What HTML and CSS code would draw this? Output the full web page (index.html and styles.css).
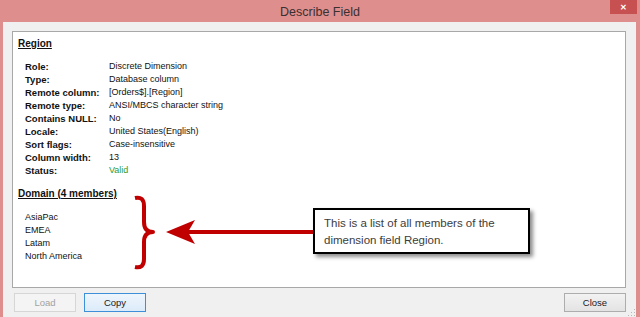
FILE: index.html
```html
<!DOCTYPE html>
<html lang="en">
    <head>
        <meta charset="UTF-8">
        <title>Describe Field</title>
        <link rel="stylesheet" href="styles.css">
    </head>
    <body>
        <div class="window">
            <div class="titlebar">
                <span class="title">Describe Field</span>
                <span class="close">&#x2715;</span>
            </div>
            <div class="client">
                <div class="panel">
                    <h4>Region</h4>
                    <div class="props">
                        <b>Role:</b><span>Discrete Dimension</span>
                        <b>Type:</b><span>Database column</span>
                        <b>Remote column:</b><span>[Orders$].[Region]</span>
                        <b>Remote type:</b><span>ANSI/MBCS character string</span>
                        <b>Contains NULL:</b><span>No</span>
                        <b>Locale:</b><span>United States(English)</span>
                        <b>Sort flags:</b><span>Case-insensitive</span>
                        <b>Column width:</b><span>13</span>
                        <b>Status:</b><span class="valid">Valid</span>
                    </div>
                    <h4 class="domain">Domain (4 members)</h4>
                    <ul class="members">
                        <li>AsiaPac</li>
                        <li>EMEA</li>
                        <li>Latam</li>
                        <li>North America</li>
                    </ul>

                    <!-- annotation drawn over the dialog -->
                    <svg class="markup" width="200" height="90" viewBox="0 0 200 90">
                        <path d="M2,4 Q11,2 11,12 L11,28 Q11,38 20,38 Q11,38 11,48 L11,65 Q11,75 2,73"
                              fill="none" stroke="#c00000" stroke-width="4" stroke-linejoin="round"/>
                        <line x1="50" y1="38" x2="182" y2="38" stroke="#c00000" stroke-width="4"/>
                        <polygon points="33,38 62,26 55,38 62,50" fill="#c00000"/>
                    </svg>
                    <div class="callout">This is a list of all members of the dimension field Region.</div>
                </div>
                <div class="buttons">
                    <button class="btn" disabled>Load</button>
                    <button class="btn focus">Copy</button>
                    <span class="spacer"></span>
                    <button class="btn">Close</button>
                </div>
                <span class="grip"></span>
            </div>
        </div>
    </body>
</html>
```

FILE: styles.css
```css
body {
    margin: 0;
    font-family: "Liberation Sans", Arial, sans-serif;
    background: #df8e8e;
}

.window {
    display: flex;
    flex-direction: column;
    width: 640px;
    height: 317px;
    background: #df8e8e;
    overflow: hidden;
}

.titlebar {
    position: relative;
    height: 22px;
    display: flex;
    align-items: center;
    justify-content: center;

    .title {
        font-size: 12.5px;
        color: #3a3030;
        padding-top: 2px;
    }

    .close {
        position: absolute;
        top: 0;
        right: 3px;
        width: 27px;
        height: 14px;
        background: #c75050;
        color: #fff;
        font-size: 8px;
        font-weight: bold;
        display: flex;
        align-items: center;
        justify-content: center;
    }
}

.client {
    position: relative;
    flex: 1;
    margin: 0 4px 0 3px;
    background: #f0f0f0;
    padding: 9px 10px 0 9px;
    display: flex;
    flex-direction: column;
}

.panel {
    position: relative;
    height: 250px;
    background: #fff;
    border: 1px solid #a8a8a8;
    padding: 5px 5px 0 5px;
    color: #111;

    h4 {
        margin: 0;
        font-size: 10px;
        line-height: 13px;
        text-decoration: underline;
    }

    .props {
        display: grid;
        grid-template-columns: 84px auto;
        margin: 10px 0 0 7px;
        font-size: 9px;
        line-height: 13px;

        b {
            font-size: 9.5px;
        }

        .valid {
            color: #2f9a2f;
        }
    }

    .domain {
        margin-top: 10px;
    }

    .members {
        list-style: none;
        margin: 11px 0 0 7px;
        padding: 0;
        font-size: 9px;
        line-height: 13px;
    }
}

.markup {
    position: absolute;
    left: 120px;
    top: 162px;
}

.callout {
    position: absolute;
    left: 300px;
    top: 176px;
    width: 199px;
    height: 32px;
    padding: 5px 5px 5px 9px;
    border: 2px solid #000;
    background: #fff;
    box-shadow: 3px 3px 4px rgba(0, 0, 0, 0.45);
    font-size: 11.5px;
    line-height: 17px;
    color: #3c3c3c;
}

.buttons {
    display: flex;
    gap: 8px;
    margin-top: 5px;
    padding-left: 2px;

    .spacer {
        flex: 1;
    }

    .btn {
        width: 62px;
        height: 19px;
        padding: 0;
        font-family: "Liberation Sans", Arial, sans-serif;
        font-size: 9.5px;
        color: #1a1a1a;
        border: 1px solid #adadad;
        border-radius: 0;
        background: linear-gradient(#f2f2f2, #e3e3e3);
    }

    .btn:disabled {
        color: #a2a2a2;
        border-color: #d6d6d6;
        background: #f4f4f4;
    }

    .focus {
        border-color: #3c8fd8;
        background: linear-gradient(#eef5fc, #dcebfa);
    }
}

.grip {
    position: absolute;
    right: 1px;
    bottom: 1px;
    width: 8px;
    height: 8px;
    background: radial-gradient(circle, #b8b8b8 0.8px, transparent 1px) 0 0 / 3px 3px;
    clip-path: polygon(100% 0, 100% 100%, 0 100%);
}
```
